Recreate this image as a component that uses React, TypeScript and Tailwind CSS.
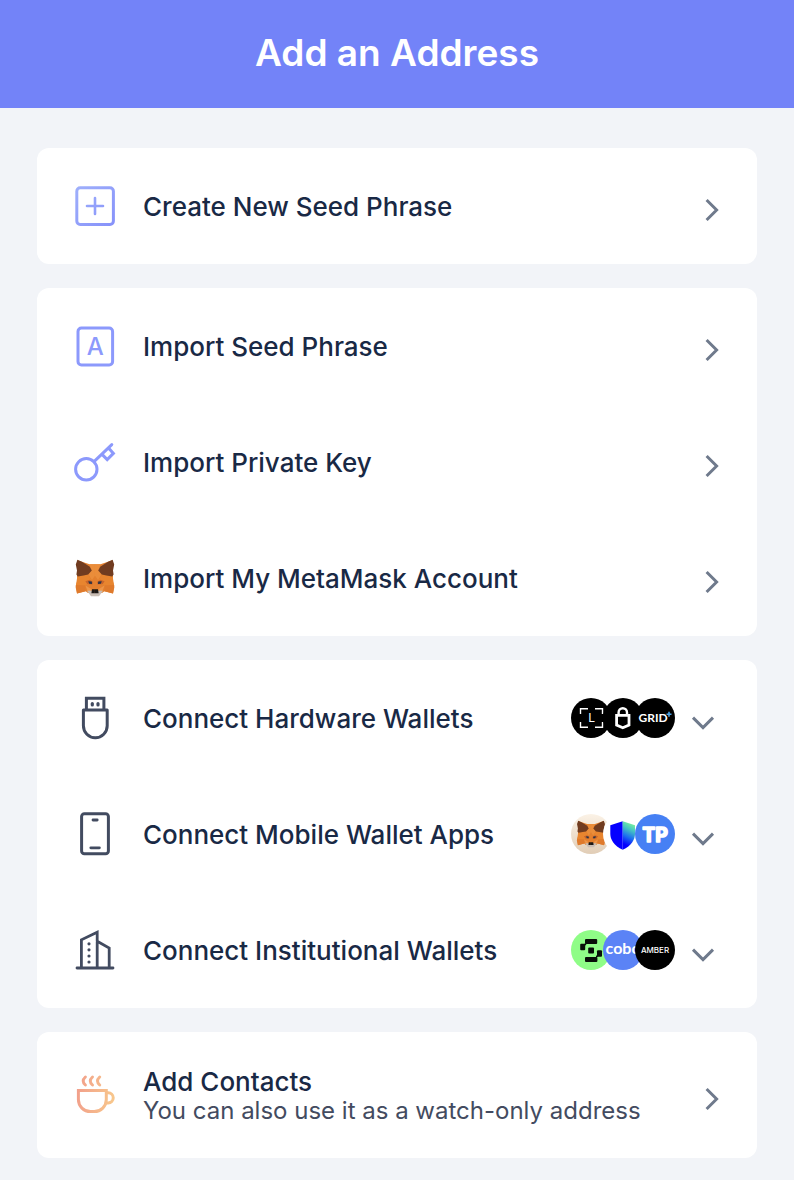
import type { ReactNode } from "react"

type Item = {
  label: string
  icon: ReactNode
  badges?: ReactNode[]
}

const groups: Item[][] = [
  [{ label: "Create New Seed Phrase", icon: <PlusIcon /> }],
  [
    { label: "Import Seed Phrase", icon: <LetterIcon /> },
    { label: "Import Private Key", icon: <KeyIcon /> },
    { label: "Import My MetaMask Account", icon: <Fox className="size-11" /> },
  ],
  [
    {
      label: "Connect Hardware Wallets",
      icon: <UsbIcon />,
      badges: [<LedgerBadge />, <TrezorBadge />, <GridBadge />],
    },
    {
      label: "Connect Mobile Wallet Apps",
      icon: <PhoneIcon />,
      badges: [<FoxBadge />, <TrustBadge />, <TokenPocketBadge />],
    },
    {
      label: "Connect Institutional Wallets",
      icon: <BuildingIcon />,
      badges: [<SafeBadge />, <CoboBadge />, <AmberBadge />],
    },
  ],
]

export default function App() {
  return (
    <div className="min-h-screen bg-[#f2f4f8] pb-5 font-['Inter',sans-serif] text-[#192945]">
      <header className="bg-[#7383f8] pt-[25px] pb-[27px] text-center">
        <h1 className="text-[37px] leading-14 font-semibold text-white">Add an Address</h1>
      </header>

      <main className="flex flex-col gap-6 px-[37px] pt-10">
        {groups.map((items, i) => (
          <section key={i} className="overflow-hidden rounded-xl bg-white">
            {items.map((item) => (
              <Row key={item.label} {...item} />
            ))}
          </section>
        ))}

        <section className="overflow-hidden rounded-xl bg-white">
          <button type="button" className="flex w-full items-center gap-[26px] px-9 py-[33px] text-left">
            <CupIcon />
            <span className="flex-1 pt-0.5">
              <span className="block text-[26px] leading-[29px] font-medium">Add Contacts</span>
              <span className="block text-2xl leading-[29px] text-[#434b60]">
                You can also use it as a watch-only address
              </span>
            </span>
            <ChevronRight />
          </button>
        </section>
      </main>
    </div>
  )
}

function Row({ label, icon, badges }: Item) {
  return (
    <button
      type="button"
      aria-expanded={badges ? false : undefined}
      className="flex w-full items-center gap-[26px] px-9 py-9 text-left"
    >
      {icon}
      <span className="flex-1 pt-0.5 text-[26px] leading-10 font-medium">{label}</span>
      {badges ? (
        <span className="flex items-center gap-[10px]">
          <span className="flex -space-x-2">
            {badges.map((badge, i) => (
              <span key={i} className="size-10 overflow-hidden rounded-full">
                {badge}
              </span>
            ))}
          </span>
          <ChevronDown />
        </span>
      ) : (
        <ChevronRight />
      )}
    </button>
  )
}

function ChevronRight() {
  return (
    <svg aria-hidden="true" viewBox="0 0 18 40" className="h-10 w-[18px] shrink-0" fill="none" stroke="#6f7a8c" strokeWidth="3">
      <path d="M3.6 14 13.6 24 3.6 34" />
    </svg>
  )
}

function ChevronDown() {
  return (
    <svg aria-hidden="true" viewBox="0 0 36 40" className="h-10 w-9 shrink-0" fill="none" stroke="#6f7a8c" strokeWidth="3">
      <path d="M8 19.6 18 29.6 28 19.6" />
    </svg>
  )
}

function Icon({ children, stroke }: { children: ReactNode; stroke: string }) {
  return (
    <svg
      aria-hidden="true"
      viewBox="0 0 44 44"
      className="size-11 shrink-0"
      fill="none"
      stroke={stroke}
      strokeWidth="3"
      strokeLinecap="round"
      strokeLinejoin="round"
    >
      {children}
    </svg>
  )
}

function PlusIcon() {
  return (
    <Icon stroke="url(#plus)">
      <defs>
        <linearGradient id="plus" gradientUnits="userSpaceOnUse" x1="2" y1="2" x2="42" y2="42">
          <stop stopColor="#9fb0fb" />
          <stop offset="1" stopColor="#8691fa" />
        </linearGradient>
      </defs>
      <rect x="3.8" y="3.8" width="36.6" height="36.6" rx="3.4" />
      <path d="M22 14V30M14 22H30" strokeWidth="2.6" />
    </Icon>
  )
}

function LetterIcon() {
  return (
    <Icon stroke="#8c99fc">
      <rect x="5" y="4" width="34.6" height="37" rx="3.4" />
      <text x="22.3" y="31" textAnchor="middle" fontSize="24" fontWeight="500" fill="#8c99fc" stroke="none">
        A
      </text>
    </Icon>
  )
}

function KeyIcon() {
  return (
    <Icon stroke="#8c99fc">
      <circle cx="13.3" cy="29.3" r="10.7" />
      <path d="M21 21.6 38.8 4.6M29.3 14.6 34.2 19.6 40.4 13.4 36 8.4" strokeLinejoin="miter" />
    </Icon>
  )
}

function UsbIcon() {
  return (
    <Icon stroke="#424b60">
      <path d="M13.4 13.6V2.2H30.9V13.6" strokeLinejoin="miter" />
      <path d="M10.4 14.1H34.2V29.8A11.9 11.9 0 0 1 10.4 29.8Z" />
      <path d="M19.3 7.6V9M25 7.6V9" strokeWidth="3.2" />
    </Icon>
  )
}

function PhoneIcon() {
  return (
    <Icon stroke="#424b60">
      <rect x="8.6" y="1.8" width="26.8" height="40" rx="2.8" />
      <path d="M20 8H24.2M17.8 35.8H26.4" strokeWidth="2.8" />
    </Icon>
  )
}

function BuildingIcon() {
  return (
    <Icon stroke="#424b60">
      <path d="M4 40H40M8.4 39V11.8L24.2 4.2V39M24.2 13.2 36.2 20V39" strokeWidth="2.8" strokeLinejoin="miter" />
      <path d="M16 15.8v.01M16 21.8v.01M16 28v.01M16 34v.01" strokeWidth="3.2" />
    </Icon>
  )
}

function CupIcon() {
  return (
    <Icon stroke="url(#cup)">
      <defs>
        <linearGradient id="cup" gradientUnits="userSpaceOnUse" x1="4" y1="20" x2="42" y2="24">
          <stop stopColor="#f2a08b" />
          <stop offset="1" stopColor="#f8c88c" />
        </linearGradient>
      </defs>
      <path d="M5.4 17.4H33.3V26.6A12 12 0 0 1 21.3 38.6H17.4A12 12 0 0 1 5.4 26.6Z" strokeLinejoin="miter" />
      <path d="M33.5 19.8H35.2A4.8 4.8 0 0 1 35.2 29.9H33.2" />
      <path d="M12.4 4Q8 8 12.4 12M19.5 4Q15.1 8 19.5 12M26.7 4Q22.3 8 26.7 12" />
    </Icon>
  )
}

function FoxHalf() {
  return (
    <>
      <path d="M4.4 4.2 16.6 8.2H22.1V37H15L12.6 35.2 4 37.4 2.8 29.4 4.4 24.6 4 19Z" fill="#e3802f" />
      <path d="M16.4 8.2 18.8 14.6 14.8 17.6 19 24 22.1 19.4V8.2Z" fill="#ea8d3a" />
      <path d="M4.4 20 15 18 18 24.4 12.4 29.6 3 29Z" fill="#e8852f" />
      <path d="M3 29 12.4 29.6 12.6 35.2 4 37.6 2.6 31Z" fill="#df7a2c" />
      <path d="M4.4 3.8 9 5.8 16.8 10.8 18.8 14.6 15.2 18.6 10.6 19.4 4.8 20.4 3.4 18.6 4 14.4 2.8 8.4Z" fill="#713c20" />
      <path d="M12.4 25.2 16.6 23.8 20 26 19.4 28.6 14.2 28Z" fill="#c9642b" />
      <path d="M15.2 25.2 18.8 25.4 19 28 16.2 27.8Z" fill="#2b3447" />
      <path d="M12.4 29.6 19 33.4 15 36Z" fill="#ee9548" />
      <path d="M14 34.8 18.4 34.6 22.1 36.4V40.2H18Z" fill="#c9bdb4" />
      <path d="M19 33.2H22.1V37.2H18.4Z" fill="#1b1715" />
    </>
  )
}

function Fox({ className }: { className: string }) {
  return (
    <svg aria-hidden="true" viewBox="0 0 44 44" className={`shrink-0 ${className}`}>
      <FoxHalf />
      <g transform="matrix(-1 0 0 1 44 0)">
        <FoxHalf />
      </g>
    </svg>
  )
}

function Badge({ children, bg }: { children: ReactNode; bg: string }) {
  return (
    <svg aria-hidden="true" viewBox="0 0 40 40" className="size-10">
      <rect width="40" height="40" fill={bg} />
      {children}
    </svg>
  )
}

function LedgerBadge() {
  return (
    <Badge bg="#000">
      <path d="M9.5 16V10.8H17M24 10.8H31.5V16M9.5 24V29.2H17M24 29.2H31.5V24" fill="none" stroke="#fff" strokeWidth="1.4" />
      <text x="17.2" y="24.2" fontSize="12" fill="#fff">
        L
      </text>
    </Badge>
  )
}

function TrezorBadge() {
  return (
    <Badge bg="#000">
      <path d="M15.6 17V14.4A4.2 4.2 0 0 1 24 14.4V17" fill="none" stroke="#fff" strokeWidth="2.4" />
      <path d="M13.6 17.4H26V27L19.8 29.8 13.6 27Z" fill="none" stroke="#fff" strokeWidth="2.8" />
    </Badge>
  )
}

function GridBadge() {
  return (
    <Badge bg="#000">
      <text x="3.6" y="24.4" className="font-['Lato',sans-serif]" fontSize="12" fontWeight="700" fill="#fff">
        GRID
      </text>
      <path d="M34 12.8V18.4M31.4 16.2H37.4" stroke="#000" strokeWidth="2.6" />
      <path d="M34 13.8V18.8M31.5 16.3H36.5" stroke="#4aa3e8" strokeWidth="1.6" />
    </Badge>
  )
}

function FoxBadge() {
  return (
    <span className="flex size-10 items-center justify-center bg-linear-to-b from-[#fbf2e6] to-[#e1cdb6]">
      <Fox className="size-8" />
    </span>
  )
}

function TrustBadge() {
  return (
    <Badge bg="#fff">
      <defs>
        <linearGradient id="trust" gradientUnits="userSpaceOnUse" x1="31" y1="8" x2="19" y2="32">
          <stop offset=".05" stopColor="#7df59a" />
          <stop offset=".3" stopColor="#48c8c0" />
          <stop offset=".6" stopColor="#1c6ff0" />
          <stop offset=".9" stopColor="#0500ff" />
        </linearGradient>
      </defs>
      <path d="M7.3 11.2 19.7 7.2V35.7C11 32 7.3 25.4 7.3 20Z" fill="#0500ff" />
      <path d="M32 11.2 19.7 7.2V35.7C28.4 32 32 25.4 32 20Z" fill="url(#trust)" />
    </Badge>
  )
}

function TokenPocketBadge() {
  return (
    <Badge bg="#4680f4">
      <text
        x="7.8"
        y="28.2"
        className="font-['Lato',sans-serif]"
        fontSize="20"
        fontWeight="900"
        fill="#fff"
        stroke="#fff"
        strokeWidth="1.6"
        strokeLinejoin="round"
      >
        TP
      </text>
    </Badge>
  )
}

function SafeBadge() {
  return (
    <Badge bg="#8ffd87">
      <g fill="#080f08">
        <rect x="14" y="9" width="12.2" height="5" rx="1" />
        <rect x="9.2" y="13.8" width="5" height="6.4" rx="1" />
        <path d="M13 14 15.2 13V14.6L14 15.8Z" />
        <rect x="17.2" y="17.6" width="5.8" height="5.8" rx="1" />
        <rect x="26" y="20.2" width="5" height="6.6" rx="1" />
        <rect x="14" y="27" width="12.4" height="5" rx="1" />
        <path d="M27.2 26.6 25 28V26L26.2 25Z" />
      </g>
    </Badge>
  )
}

function CoboBadge() {
  return (
    <Badge bg="#5b83f6">
      <text x="2.6" y="23.8" className="font-['Lato',sans-serif]" fontSize="16" fontWeight="700" fill="#fff">
        cobo
      </text>
    </Badge>
  )
}

function AmberBadge() {
  return (
    <Badge bg="#000">
      <text x="20" y="22.8" textAnchor="middle" fontSize="8" fontWeight="500" fill="#fff">
        AMBER
      </text>
    </Badge>
  )
}
